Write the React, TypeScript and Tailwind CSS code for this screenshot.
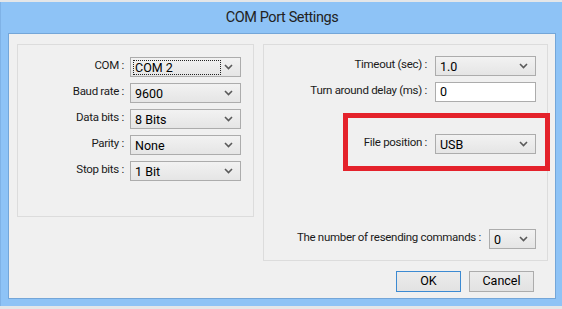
import React from "react";

const Chevron = () => (
  <svg width="9" height="6" viewBox="0 0 9 6" className="shrink-0">
    <polyline points="1,1 4.5,4.5 8,1" fill="none" stroke="#5a5a5a" strokeWidth="1.6" />
  </svg>
);

function Combo({ value, width, focus = false }: { value: string; width: string; focus?: boolean }) {
  return (
    <div
      className={`${width} h-[20px] border border-[#acacac] bg-gradient-to-b from-[#f2f2f2] to-[#e5e5e5] flex items-center justify-between pl-[2px] pr-[7px] shrink-0`}
    >
      <span
        className={`h-[15px] leading-[14px] px-[1px] ${focus ? "border border-dotted border-[#222] w-[88px]" : "border border-transparent"} text-[12.5px] text-black`}
      >
        {value}
      </span>
      <Chevron />
    </div>
  );
}

function Row({ label, labelW, gap, children, className = "" }: { label: string; labelW: string; gap: string; children: React.ReactNode; className?: string }) {
  return (
    <div className={`flex items-start ${gap} ${className}`}>
      <span className={`${labelW} text-right text-[11.5px] leading-[16px] tracking-[-0.3px] text-[#1a1a1a] whitespace-nowrap`}>{label}</span>
      {children}
    </div>
  );
}

export default function App() {
  return (
    <div
      className="w-[562px] h-[309px] bg-[#dcdfe3] flex flex-col overflow-hidden"
      style={{ fontFamily: 'Roboto, "Open Sans", sans-serif' }}
    >
      <div className="h-[2px] bg-[#e4e6e8]" />
      <div className="h-[304px] bg-[#8ec3f6] border-l border-[#7fb2e6] flex flex-col pl-[7px] pr-[6px] pb-[7px]">
        <div className="h-[31px] flex items-center justify-center text-[14.5px] tracking-[-0.4px] text-[#222]">
          COM Port Settings
        </div>
        <div className="flex-1 bg-[#f0f0f0] border border-[#74a6d8] flex flex-col pl-[8px] pt-[10px]">
          <div className="flex gap-[9px]">
            <div className="w-[237px] h-[173px] border border-[#dcdcdc] flex flex-col pt-[12px] gap-[6px]">
              <Row label="COM :" labelW="w-[106px]" gap="gap-[6px]">
                <Combo value="COM 2" width="w-[111px]" focus />
              </Row>
              <Row label="Baud rate :" labelW="w-[106px]" gap="gap-[6px]">
                <Combo value="9600" width="w-[111px]" />
              </Row>
              <Row label="Data bits :" labelW="w-[106px]" gap="gap-[6px]">
                <Combo value="8 Bits" width="w-[111px]" />
              </Row>
              <Row label="Parity :" labelW="w-[106px]" gap="gap-[6px]">
                <Combo value="None" width="w-[111px]" />
              </Row>
              <Row label="Stop bits :" labelW="w-[106px]" gap="gap-[6px]">
                <Combo value="1 Bit" width="w-[111px]" />
              </Row>
            </div>
            <div className="relative w-[285px] h-[217px] border border-[#dcdcdc] flex flex-col pt-[11px]">
              <Row label="Timeout (sec) :" labelW="w-[163px]" gap="gap-[8px]">
                <Combo value="1.0" width="w-[101px]" />
              </Row>
              <Row label="Turn around delay (ms) :" labelW="w-[163px]" gap="gap-[8px]" className="mt-[6px]">
                <div className="w-[101px] h-[20px] border border-[#acacac] bg-white text-[12.5px] leading-[18px] pl-[4px]">0</div>
              </Row>
              <Row label="File position :" labelW="w-[163px]" gap="gap-[8px]" className="mt-[32px]">
                <Combo value="USB" width="w-[101px]" />
              </Row>
              <Row label="The number of resending commands :" labelW="w-[217px]" gap="gap-[8px]" className="mt-[75px]">
                <Combo value="0" width="w-[47px]" />
              </Row>
              <div className="absolute left-[79px] top-[68px] w-[207px] h-[58px] border-[5px] border-[#e4222b]" />
            </div>
          </div>
          <div className="flex justify-end gap-[8px] mt-[10px] pr-[21px]">
            <button className="w-[65px] h-[21px] border border-[#3c8ad2] bg-gradient-to-b from-[#ececec] to-[#e2e2e2] text-[12.5px] text-black">
              OK
            </button>
            <button className="w-[65px] h-[21px] border border-[#acacac] bg-gradient-to-b from-[#ececec] to-[#e2e2e2] text-[12.5px] text-black">
              Cancel
            </button>
          </div>
        </div>
      </div>
      <div className="flex-1 bg-[#e4e6e8]" />
    </div>
  );
}
